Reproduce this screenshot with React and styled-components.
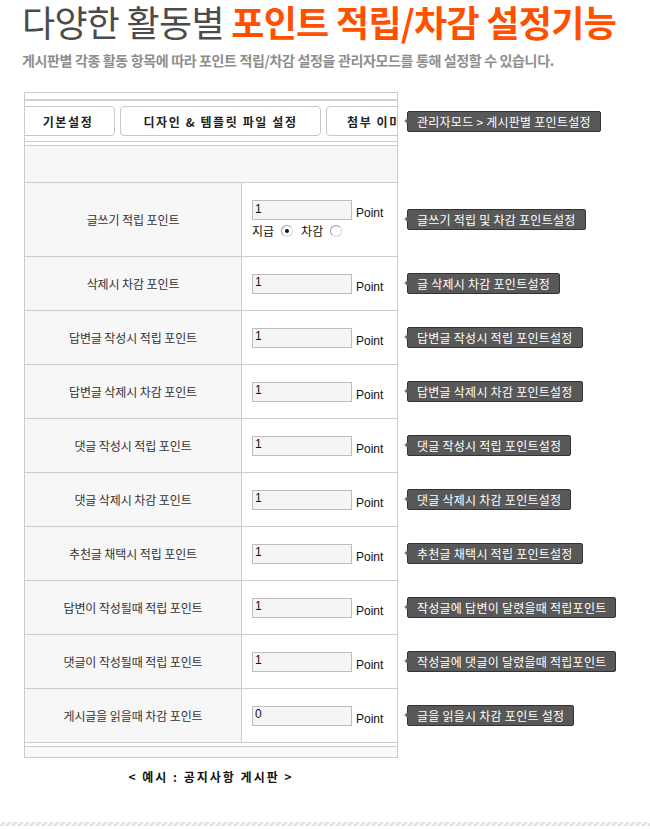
import React from "react";
import styled, { createGlobalStyle } from "styled-components";

const Global = createGlobalStyle`
  html, body { margin: 0; padding: 0; background: #fff; }
  body { font-family: "Noto Sans CJK KR", "Noto Sans", sans-serif; color: #333; }
  * { box-sizing: border-box; }
`;

const Page = styled.div`
  width: 650px;
  padding: 0 0 0 22px;
`;

const Title = styled.h1`
  margin: 0;
  font-size: 36px;
  line-height: 42px;
  font-weight: 400;
  color: #4b4b4b;
  letter-spacing: -0.7px;
  white-space: nowrap;
`;

const Accent = styled.strong`
  color: #ff5000;
  font-weight: 700;
`;

const Subtitle = styled.p`
  margin: 9px 0 0;
  font-size: 14px;
  line-height: 18px;
  font-weight: 700;
  color: #8e8e8e;
  letter-spacing: -0.35px;
  white-space: nowrap;
`;

const Board = styled.div`
  margin: 23px 0 0 2px;
  display: flex;
  flex-direction: column;
`;

const Line = styled.div`
  display: flex;
  align-items: center;
`;

const PanelPart = styled.div`
  width: 374px;
  flex: none;
  border-left: 1px solid #ccc;
  border-right: 1px solid #ccc;
`;

const PanelCap = styled(PanelPart)`
  height: 9px;
  border-top: 1px solid #ccc;
  border-bottom: 2px solid #d2d2d2;
  background: #fff;
`;

const TabsRow = styled(PanelPart)`
  display: flex;
  gap: 5px;
  padding: 5px 0 5px;
  overflow: hidden;
  border-bottom: 1px solid #ccc;
`;

const TabButton = styled.div`
  flex: none;
  width: ${(p) => p.$w}px;
  margin-left: ${(p) => p.$ml || 0}px;
  height: 30px;
  border: 1px solid #c8c8c8;
  border-radius: 4px;
  background: #fff;
  display: flex;
  align-items: center;
  justify-content: ${(p) => (p.$left ? "flex-start" : "center")};
  padding-left: ${(p) => (p.$left ? "20px" : "0")};
  overflow: hidden;
  font-size: 12px;
  font-weight: 700;
  letter-spacing: 1.6px;
  color: #222;
  white-space: nowrap;
`;

const TabsUnder = styled(PanelPart)`
  padding-top: 3px;
  background: #fff;
`;

const GrayBand = styled.div`
  height: 37px;
  border-top: 1px solid #ccc;
  background: #f7f7f7;
`;

const Row = styled(PanelPart)`
  display: grid;
  grid-template-columns: 217px 1fr;
  border-top: 1px solid #ccc;
  height: ${(p) => (p.$tall ? 74 : 54)}px;
`;

const Label = styled.div`
  background: #f7f7f7;
  border-right: 1px solid #ccc;
  display: flex;
  align-items: center;
  justify-content: center;
  font-size: 12px;
  color: #333;
  letter-spacing: -0.1px;
`;

const ValueCell = styled.div`
  background: #fff;
  padding-left: 10px;
  display: flex;
  flex-direction: column;
  justify-content: ${(p) => (p.$top ? "flex-start" : "center")};
  padding-top: ${(p) => (p.$top ? "17px" : "0")};
`;

const InputLine = styled.div`
  display: flex;
  align-items: flex-end;
  gap: 4px;
`;

const PointInput = styled.input`
  width: 100px;
  height: 20px;
  margin: 0;
  padding: 0 2px 3px;
  border: 1px solid #bdbdbd;
  background: #f5f5f5;
  font-family: "Liberation Sans", sans-serif;
  font-size: 12px;
  color: #111;
  outline: none;
`;

const PointText = styled.span`
  font-family: "Liberation Sans", sans-serif;
  font-size: 12px;
  line-height: 12px;
  color: #111;
  margin-bottom: 1px;
`;

const RadioLine = styled.div`
  margin-top: 4px;
  display: flex;
  align-items: center;
  font-size: 12px;
  color: #111;
  line-height: 14px;
`;

const RadioMark = styled.span`
  display: inline-block;
  position: relative;
  width: 12px;
  height: 12px;
  margin: 0 8px 0 7px;
  border-radius: 50%;
  border: 1px solid #9a9a9a;
  border-right-color: #d8d8d8;
  border-bottom-color: #d8d8d8;
  background: #fff;
  &::after {
    content: "";
    display: ${(p) => (p.$on ? "block" : "none")};
    position: absolute;
    left: 3px;
    top: 3px;
    width: 4px;
    height: 4px;
    border-radius: 50%;
    background: #111;
  }
`;

const PanelFoot = styled(PanelPart)`
  border-top: 1px solid #ccc;
  border-bottom: 1px solid #ccc;
  padding-top: 3px;
  background: #fff;
`;

const FootBand = styled.div`
  height: 11px;
  border-top: 1px solid #ccc;
  background: #f9f9f9;
`;

const Tip = styled.div`
  position: relative;
  margin-left: 9px;
  height: 21px;
  padding: 0 9px;
  background: #585858;
  border: 1px solid #333;
  border-radius: 2px;
  color: #fff;
  font-size: 12px;
  line-height: 19px;
  letter-spacing: 0.25px;
  white-space: nowrap;
  &::before {
    content: "";
    position: absolute;
    left: -5px;
    top: 5px;
    border-style: solid;
    border-width: 4px 4px 4px 0;
    border-color: transparent #ddd transparent transparent;
  }
  &::after {
    content: "";
    position: absolute;
    left: -3px;
    top: 6px;
    border-style: solid;
    border-width: 3px 3px 3px 0;
    border-color: transparent #585858 transparent transparent;
  }
`;

const Caption = styled.div`
  width: 374px;
  margin-top: 11px;
  text-align: center;
  font-size: 12px;
  line-height: 16px;
  font-weight: 700;
  color: #111;
  letter-spacing: 2px;
`;

const Stripe = styled.div`
  margin: 37px 0 0 -22px;
  height: 4px;
  background: repeating-linear-gradient(
    -45deg,
    #e3e3e3 0px,
    #e3e3e3 2.8px,
    #fff 2.8px,
    #fff 4.24px
  );
`;

const rows = [
  { label: "글쓰기 적립 포인트", value: "1", tip: "글쓰기 적립 및 차감 포인트설정", radio: true },
  { label: "삭제시 차감 포인트", value: "1", tip: "글 삭제시 차감 포인트설정" },
  { label: "답변글 작성시 적립 포인트", value: "1", tip: "답변글 작성시 적립 포인트설정" },
  { label: "답변글 삭제시 차감 포인트", value: "1", tip: "답변글 삭제시 차감 포인트설정" },
  { label: "댓글 작성시 적립 포인트", value: "1", tip: "댓글 작성시 적립 포인트설정" },
  { label: "댓글 삭제시 차감 포인트", value: "1", tip: "댓글 삭제시 차감 포인트설정" },
  { label: "추천글 채택시 적립 포인트", value: "1", tip: "추천글 채택시 적립 포인트설정" },
  { label: "답변이 작성될때 적립 포인트", value: "1", tip: "작성글에 답변이 달렸을때 적립포인트" },
  { label: "댓글이 작성될때 적립 포인트", value: "1", tip: "작성글에 댓글이 달렸을때 적립포인트" },
  { label: "게시글을 읽을때 차감 포인트", value: "0", tip: "글을 읽을시 차감 포인트 설정" },
];

export default function App() {
  return (
    <Page>
      <Global />
      <Title>
        다양한 활동별 <Accent>포인트 적립/차감 설정기능</Accent>
      </Title>
      <Subtitle>
        게시판별 각종 활동 항목에 따라 포인트 적립/차감 설정을 관리자모드를 통해 설정할 수 있습니다.
      </Subtitle>

      <Board>
        <PanelCap />
        <Line>
          <TabsRow>
            <TabButton $w={94} $ml={-4}>기본설정</TabButton>
            <TabButton $w={201}>디자인 &amp; 템플릿 파일 설정</TabButton>
            <TabButton $w={80} $left>첨부 이미</TabButton>
          </TabsRow>
          <Tip>관리자모드 &gt; 게시판별 포인트설정</Tip>
        </Line>
        <TabsUnder>
          <GrayBand />
        </TabsUnder>

        {rows.map((r) => (
          <Line key={r.label}>
            <Row $tall={r.radio}>
              <Label>{r.label}</Label>
              <ValueCell $top={r.radio}>
                <InputLine>
                  <PointInput defaultValue={r.value} readOnly />
                  <PointText>Point</PointText>
                </InputLine>
                {r.radio && (
                  <RadioLine>
                    지급<RadioMark $on />차감<RadioMark />
                  </RadioLine>
                )}
              </ValueCell>
            </Row>
            <Tip>{r.tip}</Tip>
          </Line>
        ))}

        <PanelFoot>
          <FootBand />
        </PanelFoot>
        <Caption>&lt; 예시 : 공지사항 게시판 &gt;</Caption>
      </Board>
      <Stripe />
    </Page>
  );
}
